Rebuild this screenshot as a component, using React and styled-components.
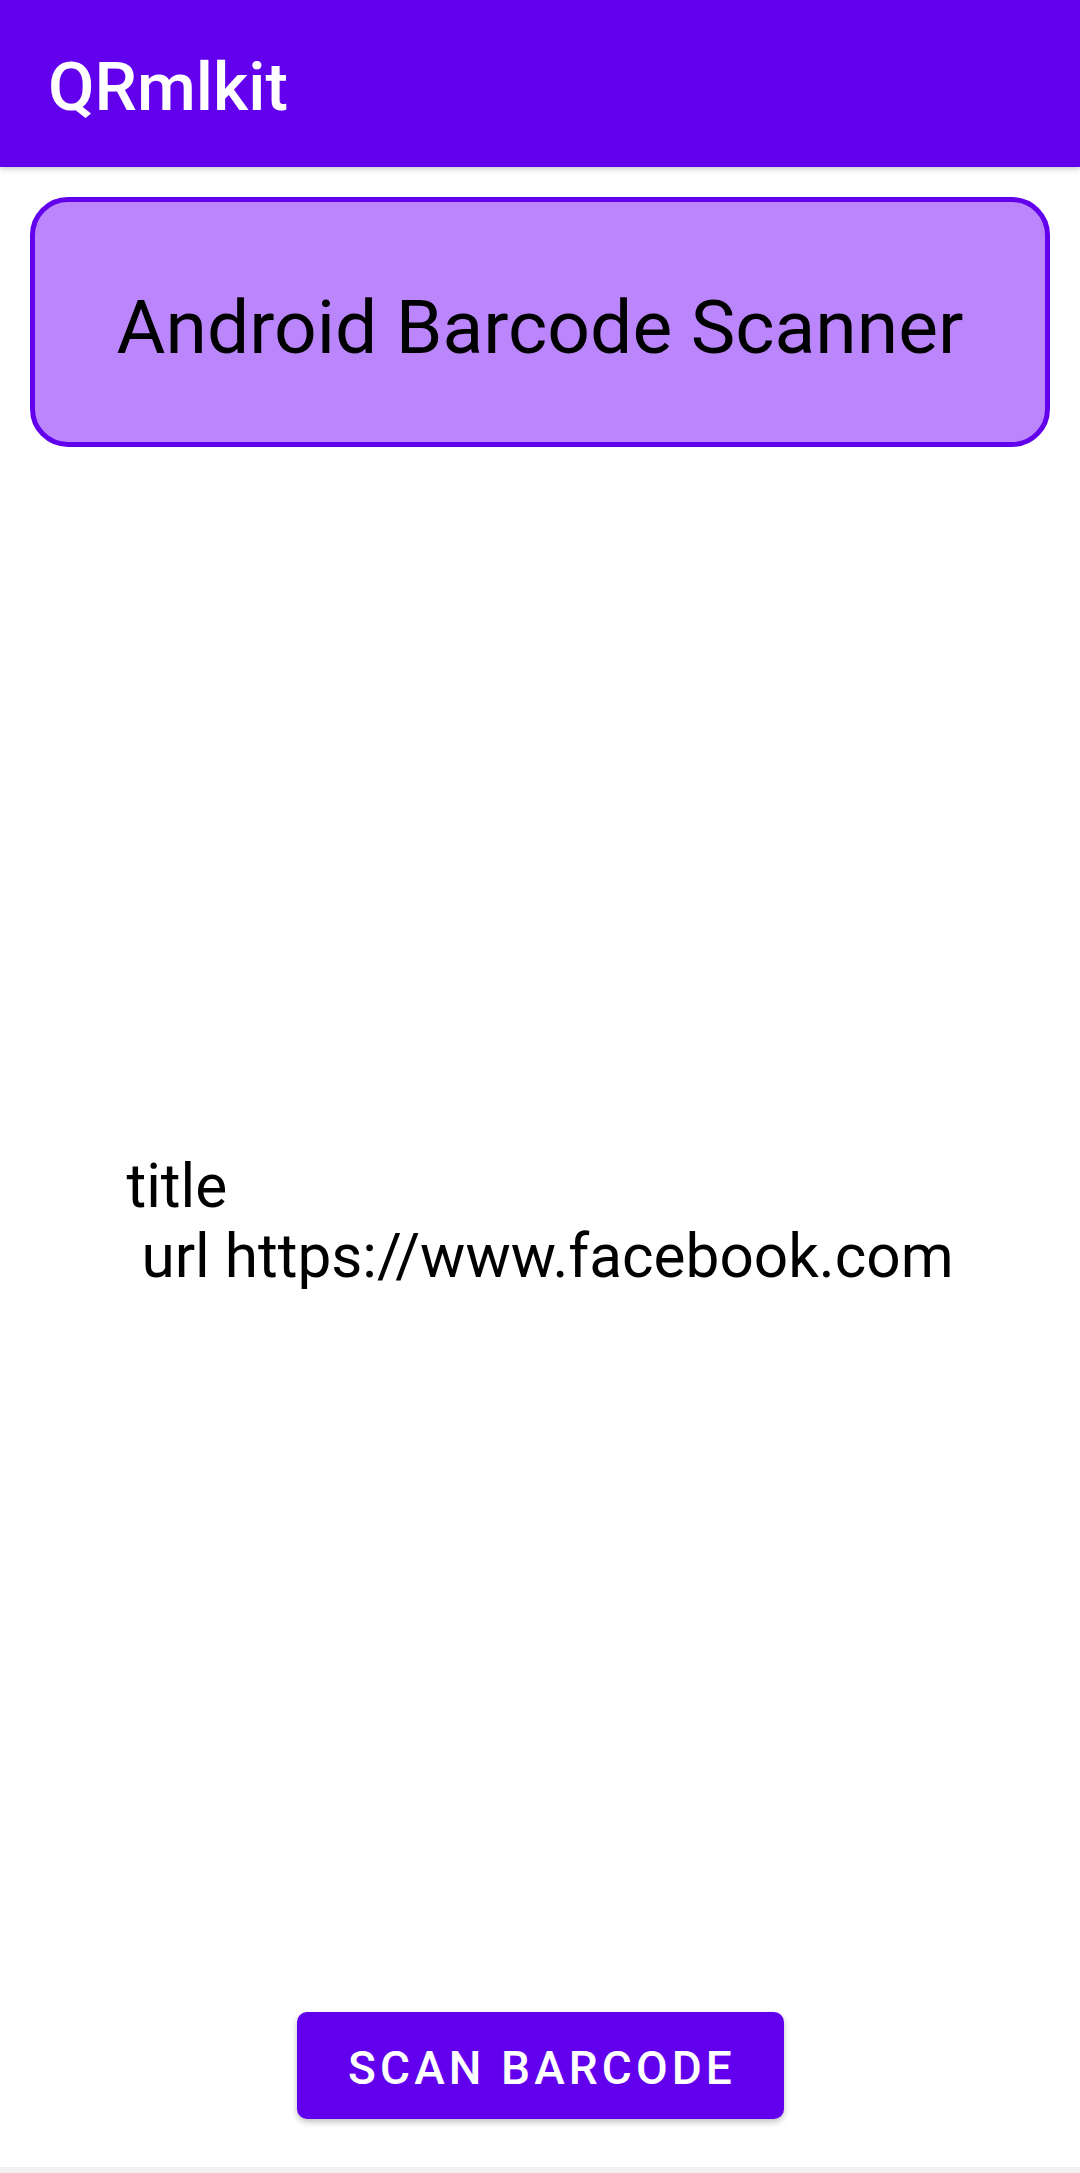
import React from "react";
import styled, { createGlobalStyle } from "styled-components";

const Global = createGlobalStyle`
  html, body { margin: 0; padding: 0; background: #ffffff; }
  body { font-family: Roboto, "Liberation Sans", Arial, sans-serif; }
  * { box-sizing: border-box; }
`;

const Screen = styled.div`
  display: flex;
  flex-direction: column;
  width: 1080px;
  height: 2173px;
  background: #ffffff;
`;

const AppBar = styled.header`
  position: relative;
  z-index: 1;
  flex: 0 0 167px;
  display: flex;
  align-items: center;
  padding: 6px 48px 0;
  background: #6200ee;
  box-shadow: 0 2px 5px rgba(0, 0, 0, 0.22);
`;

const AppTitle = styled.h1`
  margin: 0;
  font-family: Roboto, "Liberation Sans", sans-serif;
  font-weight: 500;
  font-size: 67.5px;
  color: #ffffff;
  letter-spacing: 0;
`;

const Banner = styled.div`
  margin: 30px 30px 0;
  height: 250px;
  display: flex;
  align-items: center;
  justify-content: center;
  padding-top: 9px;
  background: #bb86fc;
  border: 5px solid #6200ee;
  border-radius: 38px;
`;

const BannerText = styled.span`
  font-family: Roboto, "Liberation Sans", sans-serif;
  font-size: 75px;
  font-weight: 400;
  color: #000000;
`;

const Middle = styled.main`
  flex: 1;
  display: flex;
  align-items: center;
  justify-content: center;
  padding-bottom: 15px;
`;

const Result = styled.div`
  font-family: Roboto, "Liberation Sans", sans-serif;
  font-size: 60.3px;
  line-height: 70px;
  color: #000000;
  white-space: pre;
  text-align: left;
`;

const Footer = styled.div`
  display: flex;
  justify-content: center;
  padding-bottom: 48px;
`;

const ScanButton = styled.button`
  width: 487px;
  height: 107px;
  border: none;
  border-radius: 10px;
  background: #6200ee;
  color: #ffffff;
  font-family: Roboto, "Liberation Sans", sans-serif;
  font-weight: 500;
  font-size: 46px;
  letter-spacing: 0.089em;
  text-transform: uppercase;
  padding: 4px 0 0 4px;
  box-shadow: 0 3px 6px rgba(0, 0, 0, 0.25);
`;

const NavStrip = styled.div`
  flex: 0 0 6px;
  background: #f1f1f1;
`;

export default function App() {
  return (
    <>
      <Global />
      <Screen>
        <AppBar>
          <AppTitle>QRmlkit</AppTitle>
        </AppBar>
        <Banner>
          <BannerText>Android Barcode Scanner</BannerText>
        </Banner>
        <Middle>
          <Result>{"title\n url https://www.facebook.com"}</Result>
        </Middle>
        <Footer>
          <ScanButton>Scan Barcode</ScanButton>
        </Footer>
        <NavStrip />
      </Screen>
    </>
  );
}
